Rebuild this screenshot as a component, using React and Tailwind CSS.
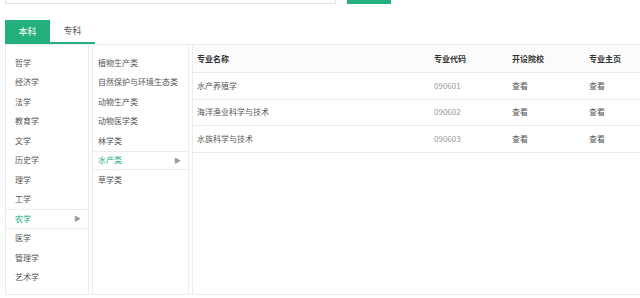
import React from 'react';

const leftItems = ['哲学', '经济学', '法学', '教育学', '文学', '历史学', '理学', '工学', '农学', '医学', '管理学', '艺术学'];
const midItems = ['植物生产类', '自然保护与环境生态类', '动物生产类', '动物医学类', '林学类', '水产类', '草学类'];
const rows = [
  { name: '水产养殖学', code: '090601' },
  { name: '海洋渔业科学与技术', code: '090602' },
  { name: '水族科学与技术', code: '090603' },
];

const Arrow = () => <span className="text-[7px] leading-none text-[#999]">▶</span>;

const MenuItem = ({ label, active, pad }) => (
  <div
    className={
      'flex h-[19.5px] items-center justify-between pr-[7px] ' +
      pad +
      (active ? ' border-y border-[#ececec] text-[#23b07d]' : ' border-y border-transparent text-[#555]')
    }
  >
    <span>{label}</span>
    {active && <Arrow />}
  </div>
);

export default function App() {
  return (
    <div
      className="h-[298px] w-[640px] overflow-hidden bg-white text-[8px]"
      style={{ fontFamily: '"Noto Sans CJK SC", "Noto Sans", sans-serif' }}
    >
      {/* search bar, cut off at top */}
      <div className="-mt-[26px] flex items-end">
        <div className="ml-[5px] h-[30px] w-[331px] border border-[#e3e3e3] bg-white" />
        <div className="ml-[11px] h-[29px] w-[44px] bg-[#23b07d]" />
      </div>

      {/* tabs */}
      <div className="mt-[16px] flex pl-[5px]">
        <div className="flex h-[24px] w-[45px] items-center justify-center bg-[#23b07d] text-[9px] text-white">本科</div>
        <div className="flex h-[24px] w-[45px] items-center justify-center border-b-2 border-[#23b07d] text-[9px] text-[#555]">专科</div>
      </div>

      {/* panel */}
      <div className="ml-[5px] flex h-[251px] border-y border-[#ececec]">
        <div className="w-[84px] border-x border-[#ececec] pt-[8px]">
          {leftItems.map((l) => (
            <MenuItem key={l} label={l} active={l === '农学'} pad="pl-[9px]" />
          ))}
        </div>
        <div className="ml-[3px] w-[97px] border-x border-[#ececec] pt-[8px]">
          {midItems.map((l) => (
            <MenuItem key={l} label={l} active={l === '水产类'} pad="pl-[5px]" />
          ))}
        </div>
        <div className="ml-[3px] flex-1 border-l border-[#ececec]">
          <div className="flex h-[28px] items-center border-b border-[#ececec] bg-[#fbfbfb] font-bold text-[#333]">
            <div className="w-[241px] pl-[4px]">专业名称</div>
            <div className="w-[78px]">专业代码</div>
            <div className="w-[77px]">开设院校</div>
            <div>专业主页</div>
          </div>
          {rows.map((r) => (
            <div key={r.code} className="flex h-[26.5px] items-center border-b border-[#ececec] text-[#555]">
              <div className="w-[241px] pl-[4px]">{r.name}</div>
              <div className="w-[78px] text-[#999]">{r.code}</div>
              <div className="w-[77px]">查看</div>
              <div>查看</div>
            </div>
          ))}
        </div>
      </div>
    </div>
  );
}
